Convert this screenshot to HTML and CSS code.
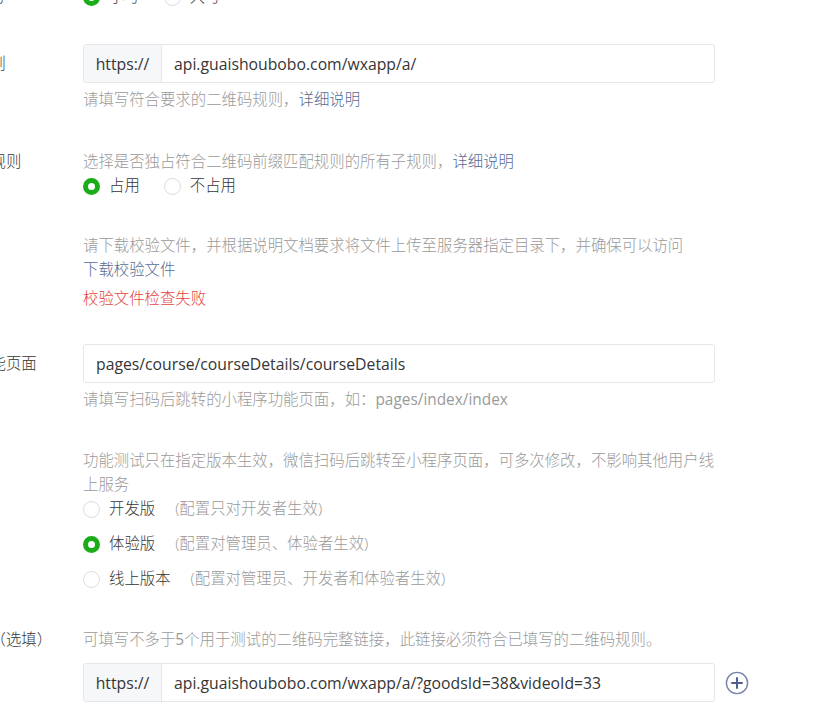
FILE: index.html
```html
<!DOCTYPE html>
<html lang="zh-CN">
<head>
<meta charset="utf-8">
<title>配置二维码规则</title>
<link rel="stylesheet" href="styles.css">
</head>
<body>
<div class="form">
  <div class="row r0">
    <div class="label">区分大小写</div>
    <div class="ctrl">
      <div class="radios">
        <span class="radio"><i class="dot on"></i>小写</span>
        <span class="radio"><i class="dot"></i>大写</span>
      </div>
    </div>
  </div>

  <div class="row r1">
    <div class="label tall">二维码规则</div>
    <div class="ctrl">
      <div class="group"><span class="addon">https://</span><span class="val">api.guaishoubobo.com/wxapp/a/</span></div>
      <p class="tip">请填写符合要求的二维码规则，<a class="link">详细说明</a></p>
    </div>
  </div>

  <div class="row r2">
    <div class="label">前缀占用规则</div>
    <div class="ctrl">
      <p class="tip flat">选择是否独占符合二维码前缀匹配规则的所有子规则，<a class="link">详细说明</a></p>
      <div class="radios">
        <span class="radio"><i class="dot on"></i>占用</span>
        <span class="radio"><i class="dot"></i>不占用</span>
      </div>
    </div>
  </div>

  <div class="row r3">
    <div class="label">校验文件</div>
    <div class="ctrl">
      <p class="tip flat">请下载校验文件，并根据说明文档要求将文件上传至服务器指定目录下，并确保可以访问</p>
      <p class="line"><a class="link">下载校验文件</a></p>
      <p class="err">校验文件检查失败</p>
    </div>
  </div>

  <div class="row r4">
    <div class="label tall">小程序功能页面</div>
    <div class="ctrl">
      <div class="group"><span class="val">pages/course/courseDetails/courseDetails</span></div>
      <p class="tip">请填写扫码后跳转的小程序功能页面，如：<span class="latin">pages/index/index</span></p>
    </div>
  </div>

  <div class="row r5">
    <div class="label">测试范围</div>
    <div class="ctrl">
      <p class="tip flat">功能测试只在指定版本生效，微信扫码后跳转至小程序页面，可多次修改，不影响其他用户线上服务</p>
      <div class="vlist">
        <span class="radio"><i class="dot"></i><span class="name">开发版</span><span class="note">(配置只对开发者生效)</span></span>
        <span class="radio"><i class="dot on"></i><span class="name">体验版</span><span class="note">(配置对管理员、体验者生效)</span></span>
        <span class="radio"><i class="dot"></i><span class="name">线上版本</span><span class="note">(配置对管理员、开发者和体验者生效)</span></span>
      </div>
    </div>
  </div>

  <div class="row r6">
    <div class="label">测试链接（选填）</div>
    <div class="ctrl">
      <p class="tip flat">可填写不多于<span class="latin">5</span>个用于测试的二维码完整链接，此链接必须符合已填写的二维码规则。</p>
      <div class="addrow">
        <div class="group"><span class="addon">https://</span><span class="val">api.guaishoubobo.com/wxapp/a/?goodsId=38&amp;videoId=33</span></div>
        <span class="plus"><svg width="24" height="24" viewBox="0 0 24 24"><circle cx="12" cy="12" r="10.6" fill="none" stroke="#7583a8" stroke-width="1.4"/><path d="M12 7v10M7 12h10" stroke="#4e5f8f" stroke-width="2" stroke-linecap="round"/></svg></span>
      </div>
    </div>
  </div>
</div>
</body>
</html>
```

FILE: styles.css
```css
html, body {
  margin: 0;
  padding: 0;
  background: #fff;
  overflow: hidden;
}
body {
  font-family: "Open Sans", "Noto Sans CJK SC", sans-serif;
  font-size: 15.4px;
  font-weight: 300;
  color: #353535;
  width: 827px;
  height: 713px;
}
p { margin: 0; }
.form {
  margin-top: -15px;
  margin-left: -71px;
  display: flex;
  flex-direction: column;
}
.row {
  display: flex;
  align-items: flex-start;
}
.label {
  width: 154px;
  flex: none;
  line-height: 24px;
  white-space: nowrap;
  color: #353535;
}
.label.tall { line-height: 39px; }
.ctrl {
  width: 632px;
  flex: none;
  line-height: 24px;
}
.r1 { margin-top: 35px; }
.r2 { margin-top: 38px; }
.r3 { margin-top: 36px; }
.r4 { margin-top: 33px; }
.r5 { margin-top: 37px; }
.r6 { margin-top: 37px; }

.radios { display: flex; gap: 24px; height: 24px; }
.radio { display: inline-flex; align-items: center; height: 24px; color: #353535; }
.dot {
  box-sizing: border-box;
  width: 17px;
  height: 17px;
  border-radius: 50%;
  border: 1px solid #dcdcdc;
  background: #fff;
  margin-right: 9px;
  flex: none;
}
.dot.on { border: 5px solid #1aad19; }

.group {
  box-sizing: border-box;
  display: flex;
  flex: none;
  height: 39px;
  border: 1px solid #e5e7ea;
  border-radius: 3px;
  background: #fff;
  width: 632px;
  font-size: 15.75px;
  font-weight: 400;
}
.addon {
  box-sizing: border-box;
  width: 78px;
  flex: none;
  background: #f6f7f9;
  border-right: 1px solid #e5e7ea;
  display: flex;
  align-items: center;
  justify-content: center;
  color: #353535;
  border-radius: 3px 0 0 3px;
}
.val {
  display: flex;
  align-items: center;
  padding-left: 12px;
  color: #353535;
  white-space: nowrap;
}
.tip { color: #9a9a9a; margin-top: 5px; }
.tip.flat { margin-top: 0; }
.latin { font-weight: 400; }
.link { color: #576b95; text-decoration: none; }
.err { color: #e64340; margin-top: 5px; }
.vlist { display: flex; flex-direction: column; gap: 11px; }
.name { margin-right: 20px; }
.note { color: #9a9a9a; }
.addrow { display: flex; align-items: center; margin-top: 11px; }
.plus { display: flex; margin-left: 10px; }
```
